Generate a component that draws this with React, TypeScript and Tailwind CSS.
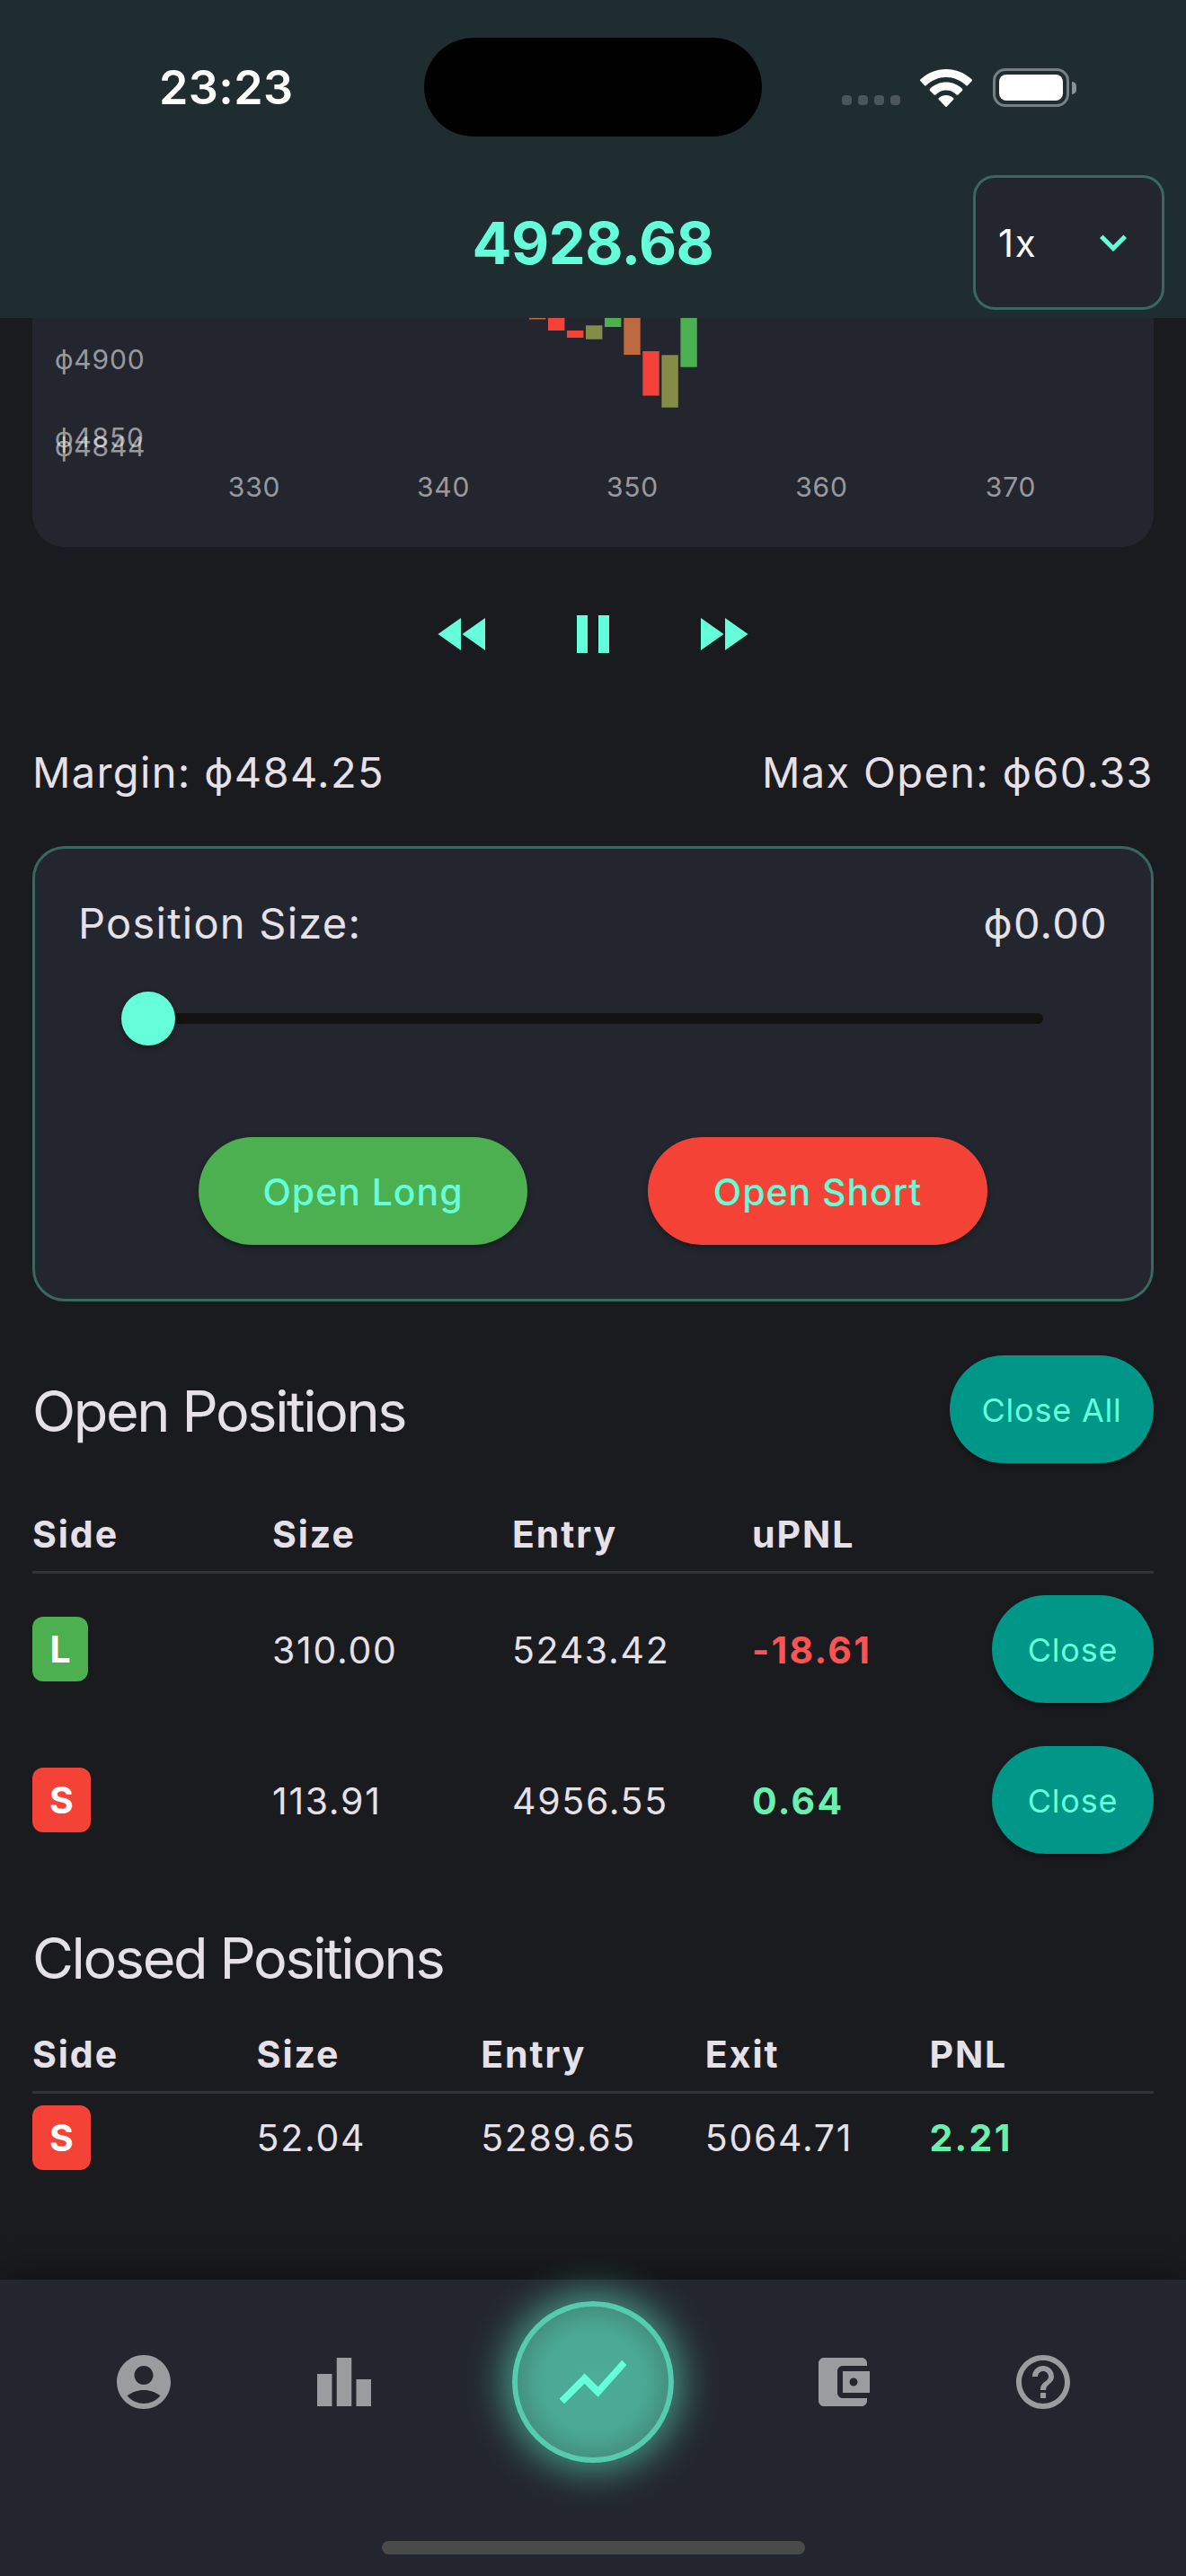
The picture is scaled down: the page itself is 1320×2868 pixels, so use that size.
import {useState} from "react";
import type {ReactNode} from "react";

type Side = "L" | "S";

const openPositions: {side: Side; size: string; entry: string; pnl: string}[] = [
    {side: "L", size: "310.00", entry: "5243.42", pnl: "-18.61"},
    {side: "S", size: "113.91", entry: "4956.55", pnl: "0.64"},
];

const closedPositions: {side: Side; size: string; entry: string; exit: string; pnl: string}[] = [
    {side: "S", size: "52.04", entry: "5289.65", exit: "5064.71", pnl: "2.21"},
];

// x, top, height, colour
const candles: [number, number, number, string][] = [
    [553, -10, 11.5, "#bd6941"],
    [574, -10, 24, "#f44336"],
    [595, 14, 8, "#f44336"],
    [616, 8.3, 15.4, "#848c47"],
    [637, -10, 20, "#4caf50"],
    [658.3, -10, 51, "#bd6941"],
    [679.3, 37, 49.5, "#f44336"],
    [700.4, 41.3, 58.4, "#848c47"],
    [721.4, -10, 64.7, "#4caf50"],
];

const pnlColor = (v: string) => (v.startsWith("-") ? "text-[#ff5252]" : "text-[#69f0ae]");

const StatusBar = () => (
    <div className="relative flex h-[195px] items-center justify-between pl-[177px] pr-[122px]">
        <span className="text-[52px] font-semibold leading-none tracking-[0.4px] text-white">23:23</span>
        <div className="absolute left-[472px] top-[42px] h-[110px] w-[376px] rounded-full bg-black"/>
        <div className="flex items-center">
            <div className="mr-[22px] mt-[28px] flex gap-[7px]">
                {[0, 1, 2, 3].map((i) => (
                    <span key={i} className="h-[11px] w-[11px] rounded-[4px] bg-[#4c5659]"/>
                ))}
            </div>
            <svg viewBox="0 0 58 42" className="mr-[23px] h-[42px] w-[58px]" fill="#fff">
                <path d="M29 0C18.2 0 8.3 4.2.6 11.2a1.6 1.6 0 0 0 0 2.3l4.3 4.5a1.4 1.4 0 0 0 2 0C12.9 12.4 20.6 9 29 9s16.1 3.4 22.1 9a1.4 1.4 0 0 0 2 0l4.3-4.5a1.6 1.6 0 0 0 0-2.3C49.7 4.2 39.8 0 29 0Z"/>
                <path d="M29 14.5c-6.9 0-13.2 2.7-17.9 7.2a1.6 1.6 0 0 0 0 2.3l4.4 4.4a1.4 1.4 0 0 0 1.9 0c3.1-2.9 7.1-4.9 11.6-4.9s8.5 2 11.6 4.9a1.4 1.4 0 0 0 1.9 0l4.4-4.4a1.6 1.6 0 0 0 0-2.3C42.2 17.2 35.9 14.5 29 14.5Z"/>
                <path d="M29 29c-3 0-5.8 1.1-8 2.9a1.5 1.5 0 0 0 0 2.2l7.1 7.5a1.3 1.3 0 0 0 1.8 0l7.1-7.5a1.5 1.5 0 0 0 0-2.2C34.8 30.1 32 29 29 29Z"/>
            </svg>
            <div className="h-[43px] w-[85px] rounded-[14px] border-[3px] border-[#768083] p-[4px]">
                <div className="h-full w-full rounded-[8px] bg-white"/>
            </div>
            <span className="ml-[3px] h-[14px] w-[5px] rounded-r-full bg-[#8a9294]"/>
        </div>
    </div>
);

const Icon = ({d, className}: {d: string; className: string}) => (
    <svg viewBox="0 0 24 24" className={className} fill="currentColor">
        <path d={d}/>
    </svg>
);

const Chart = () => (
    <div className="overflow-hidden rounded-b-[36px] bg-[#24262f]">
        <svg viewBox="0 0 1248 255" className="block h-[255px] w-full">
            {candles.map(([x, y, h, fill]) => (
                <rect key={x} x={x} y={y} width="18.4" height={h} fill={fill}/>
            ))}
            <g fill="#fff" fillOpacity="0.54" className="text-[30px] tracking-[0.8px]">
                <text x="25" y="57">ϕ4900</text>
                <text x="25" y="144">ϕ4850</text>
                <text x="25" y="154">ϕ4844</text>
                {[330, 340, 350, 360, 370].map((n, i) => (
                    <text key={n} x={247 + i * 210.5} y="199" textAnchor="middle">{n}</text>
                ))}
            </g>
        </svg>
    </div>
);

const Badge = ({side}: {side: Side}) => (
    <span
        className={`inline-flex h-[72px] items-center justify-center rounded-[12px] pt-[2px] text-[41px] font-bold text-white ${
            side === "L" ? "w-[62px] bg-[#4caf50]" : "w-[65px] bg-[#f44336]"
        }`}
    >
        {side}
    </span>
);

const TealButton = ({children, className}: {children: ReactNode; className: string}) => (
    <button
        className={`h-[120px] rounded-[60px] bg-[#009688] pt-[2px] text-[36px] tracking-[0.8px] text-[#64ffda] shadow-[0_3px_6px_rgba(0,0,0,0.35)] ${className}`}
    >
        {children}
    </button>
);

const Cell = ({children}: {children: ReactNode}) => (
    <span className="pt-[3px] tracking-[1.7px]">{children}</span>
);

const Pnl = ({value}: {value: string}) => (
    <span className={`pt-[3px] font-bold tracking-[2.3px] ${pnlColor(value)}`}>{value}</span>
);

const NavItem = ({d}: {d: string}) => (
    <button className="grid w-[223px] place-items-center text-[#9b9ca0]">
        <Icon d={d} className="h-[72px] w-[72px]"/>
    </button>
);

const App = () => {
    const [speed] = useState("1x");

    return (
        <div
            className="flex h-[2868px] w-[1320px] flex-col overflow-hidden bg-[#1a1b1f] text-[#e6e1e9] [font-family:Inter,'Noto_Sans',sans-serif]">
            <header className="h-[354px] shrink-0 bg-[#1f2c30]">
                <StatusBar/>
                <div className="grid h-[150px] grid-cols-3 items-center pr-[24px]">
                    <span/>
                    <h1 className="ml-[24px] text-center text-[65px] font-bold leading-none tracking-[-0.5px] text-[#64ffda]">4928.68</h1>
                    <button
                        className="flex h-[150px] w-[213px] items-center justify-between justify-self-end rounded-[24px] border-[3px] border-[#38685f] bg-[#24262f] pl-[25px] pr-[24px] text-[42px] tracking-[1.7px] text-white">
                        {speed}
                        <Icon
                            d="M7.41 8.59 12 13.17l4.59-4.58L18 10l-6 6-6-6 1.41-1.41z"
                            className="h-[60px] w-[60px] text-[#64ffda]"
                        />
                    </button>
                </div>
            </header>

            <main className="px-[36px]">
                <Chart/>

                {/* playback */}
                <div className="mt-[61px] flex justify-center gap-[72px] text-[#64ffda]">
                    <Icon d="M11 18V6l-8.5 6 8.5 6zm.5-6 8.5 6V6l-8.5 6z" className="h-[72px] w-[72px]"/>
                    <Icon d="M6 19h4V5H6v14zm8-14v14h4V5h-4z" className="h-[72px] w-[72px]"/>
                    <Icon d="m4 18 8.5-6L4 6v12zm9-12v12l8.5-6L13 6z" className="h-[72px] w-[72px]"/>
                </div>

                <div className="mt-[82px] flex h-[72px] items-center justify-between text-[47px] tracking-[1.35px]">
                    <span>Margin: ϕ484.25</span>
                    <span>Max Open: ϕ60.33</span>
                </div>

                {/* order form */}
                <section
                    className="mt-[46px] h-[507px] rounded-[36px] border-[3px] border-[#38685f] bg-[#24262f] px-[48px] pt-[48px]">
                    <div className="flex h-[70px] items-center justify-between text-[47px] tracking-[1.25px]">
                        <span>Position Size:</span>
                        <span>ϕ0.00</span>
                    </div>
                    <div className="mt-[41px] flex h-[60px] items-center px-[72px]">
                        <div className="relative h-[12px] w-full rounded-full bg-[#121212]">
                            <span
                                className="absolute left-[-24px] top-[-24px] h-[60px] w-[60px] rounded-full bg-[#64ffda] shadow-[0_3px_6px_rgba(0,0,0,0.35)]"/>
                        </div>
                    </div>
                    <div className="mt-[102px] flex justify-evenly text-[41px] font-medium tracking-[0.95px] text-[#64ffda]">
                        <button className="h-[120px] w-[366px] rounded-full bg-[#4caf50] pt-[3px] shadow-[0_3px_6px_rgba(0,0,0,0.35)]">
                            Open Long
                        </button>
                        <button className="h-[120px] w-[378px] rounded-full bg-[#f44336] pt-[3px] shadow-[0_3px_6px_rgba(0,0,0,0.35)]">
                            Open Short
                        </button>
                    </div>
                </section>

                <div className="mt-[60px] flex items-center justify-between">
                    <h2 className="pt-[4px] text-[63px] tracking-[-2.4px]">Open Positions</h2>
                    <TealButton className="w-[227px]">Close All</TealButton>
                </div>
                <div
                    className="mt-[39px] grid h-[84px] grid-cols-[repeat(4,267px)_180px] items-center border-b-[3px] border-[#333439] text-[41px] font-bold tracking-[1.95px]">
                    <span>Side</span>
                    <span>Size</span>
                    <span>Entry</span>
                    <span>uPNL</span>
                </div>
                {openPositions.map((p) => (
                    <div
                        key={p.entry}
                        className="grid h-[168px] grid-cols-[repeat(4,267px)_180px] items-center text-[41px]"
                    >
                        <span className="flex"><Badge side={p.side}/></span>
                        <Cell>{p.size}</Cell>
                        <Cell>{p.entry}</Cell>
                        <Pnl value={p.pnl}/>
                        <TealButton className="w-[180px]">Close</TealButton>
                    </div>
                ))}

                <h2 className="mt-[50px] h-[84px] text-[63px] leading-[84px] tracking-[-2.4px]">Closed Positions</h2>
                <div
                    className="mt-[24px] grid h-[85px] grid-cols-5 items-center border-b-[3px] border-[#333439] pt-[2px] text-[41px] font-bold tracking-[1.95px]">
                    <span>Side</span>
                    <span>Size</span>
                    <span>Entry</span>
                    <span>Exit</span>
                    <span>PNL</span>
                </div>
                {closedPositions.map((p) => (
                    <div key={p.entry} className="mt-[12px] grid h-[73px] grid-cols-5 items-center text-[41px]">
                        <span className="flex"><Badge side={p.side}/></span>
                        <Cell>{p.size}</Cell>
                        <Cell>{p.entry}</Cell>
                        <Cell>{p.exit}</Cell>
                        <Pnl value={p.pnl}/>
                    </div>
                ))}
            </main>

            <nav
                className="mt-auto flex h-[330px] shrink-0 flex-col bg-[#24262f] pt-[24px] shadow-[0_-6px_36px_rgba(0,0,0,0.35)]">
                <div className="flex h-[180px] px-[48px]">
                    <NavItem
                        d="M12 2C6.48 2 2 6.48 2 12s4.48 10 10 10 10-4.48 10-10S17.52 2 12 2zm0 4c1.93 0 3.5 1.57 3.5 3.5S13.93 13 12 13s-3.5-1.57-3.5-3.5S10.07 6 12 6zm0 14c-2.03 0-4.43-.82-6.14-2.88C7.55 15.8 9.68 15 12 15s4.45.8 6.14 2.12C16.43 19.18 14.03 20 12 20z"/>
                    <NavItem d="M7.5 21H2V9h5.5v12zm7.25-18h-5.5v18h5.5V3zM22 11h-5.5v10H22V11z"/>
                    <div className="flex flex-1 justify-center">
                        <button
                            className="grid h-[180px] w-[180px] place-items-center rounded-full border-[6px] border-[#55ccb0] bg-[radial-gradient(closest-side,#4dad99_0%,#4aa794_70%,#459180_100%)] text-[#64ffda] shadow-[0_0_40px_10px_rgba(100,255,218,0.5)]">
                            <Icon
                                d="m3.5 18.49 6-6.01 4 4L22 6.92l-1.41-1.41-7.09 7.97-4-4L2 16.99z"
                                className="h-[90px] w-[90px]"
                            />
                        </button>
                    </div>
                    <NavItem
                        d="M21 18v1c0 1.1-.9 2-2 2H5c-1.11 0-2-.9-2-2V5c0-1.1.89-2 2-2h14c1.1 0 2 .9 2 2v1h-9c-1.11 0-2 .9-2 2v8c0 1.1.89 2 2 2h9zm-9-2h10V8H12v8zm4-2.5c-.83 0-1.5-.67-1.5-1.5s.67-1.5 1.5-1.5 1.5.67 1.5 1.5-.67 1.5-1.5 1.5z"/>
                    <NavItem
                        d="M11 18h2v-2h-2v2zm1-16C6.48 2 2 6.48 2 12s4.48 10 10 10 10-4.48 10-10S17.52 2 12 2zm0 18c-4.41 0-8-3.59-8-8s3.59-8 8-8 8 3.59 8 8-3.59 8-8 8zm0-14c-2.21 0-4 1.79-4 4h2c0-1.1.9-2 2-2s2 .9 2 2c0 2-3 1.75-3 5h2c0-2.25 3-2.5 3-5 0-2.21-1.79-4-4-4z"/>
                </div>
                <div className="mx-auto mt-[87px] h-[15px] w-[471px] rounded-full bg-[#4a4a4a]"/>
            </nav>
        </div>
    );
};

export default App;
